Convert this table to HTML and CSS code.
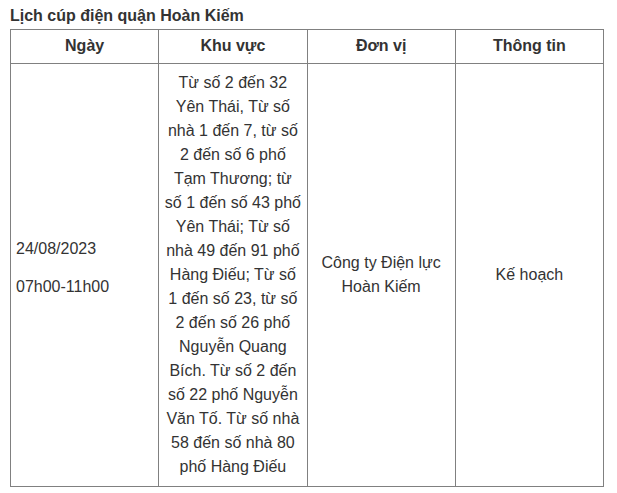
FILE: index.html
```html
<!DOCTYPE html>
<html lang="vi">
<head>
<meta charset="utf-8">
<link rel="stylesheet" href="styles.css">
</head>
<body>
<div class="wrap">
  <p class="title">Lịch cúp điện quận Hoàn Kiếm</p>
  <table class="sched">
    <thead>
      <tr>
        <th>Ngày</th>
        <th>Khu vực</th>
        <th>Đơn vị</th>
        <th>Thông tin</th>
      </tr>
    </thead>
    <tbody>
      <tr>
        <td class="left">
          <p class="para">24/08/2023</p>
          <p class="para">07h00-11h00</p>
        </td>
        <td>Từ số 2 đến 32 Yên Thái, Từ số nhà 1 đến 7, từ số 2 đến số 6 phố Tạm Thương; từ số 1 đến số 43 phố Yên Thái; Từ số nhà 49 đến 91 phố Hàng Điếu; Từ số 1 đến số 23, từ số 2 đến số 26 phố Nguyễn Quang Bích. Từ số 2 đến số 22 phố Nguyễn Văn Tố. Từ số nhà 58 đến số nhà 80 phố Hàng Điếu</td>
        <td>Công ty Điện lực Hoàn Kiếm</td>
        <td>Kế hoạch</td>
      </tr>
    </tbody>
  </table>
</div>
</body>
</html>
```

FILE: styles.css
```css
html, body {
  margin: 0;
  padding: 0;
  background: #ffffff;
}
.wrap {
  padding: 4px 10px 0 10px;
  font-family: "Liberation Sans", Arial, sans-serif;
  font-size: 16px;
  line-height: 24px;
  color: #333333;
}
.title {
  margin: 0 0 1px 0;
  font-weight: bold;
}
.sched {
  width: 594px;
  border-collapse: collapse;
  table-layout: fixed;
}
.sched th,
.sched td {
  border: 1px solid #808080;
  padding: 7px 5px;
  text-align: center;
  vertical-align: middle;
}
.sched th {
  padding: 4px 5px 5px 5px;
  font-weight: bold;
}
.sched td.left {
  text-align: left;
}
.para {
  margin: 0 0 14px 0;
}
```
